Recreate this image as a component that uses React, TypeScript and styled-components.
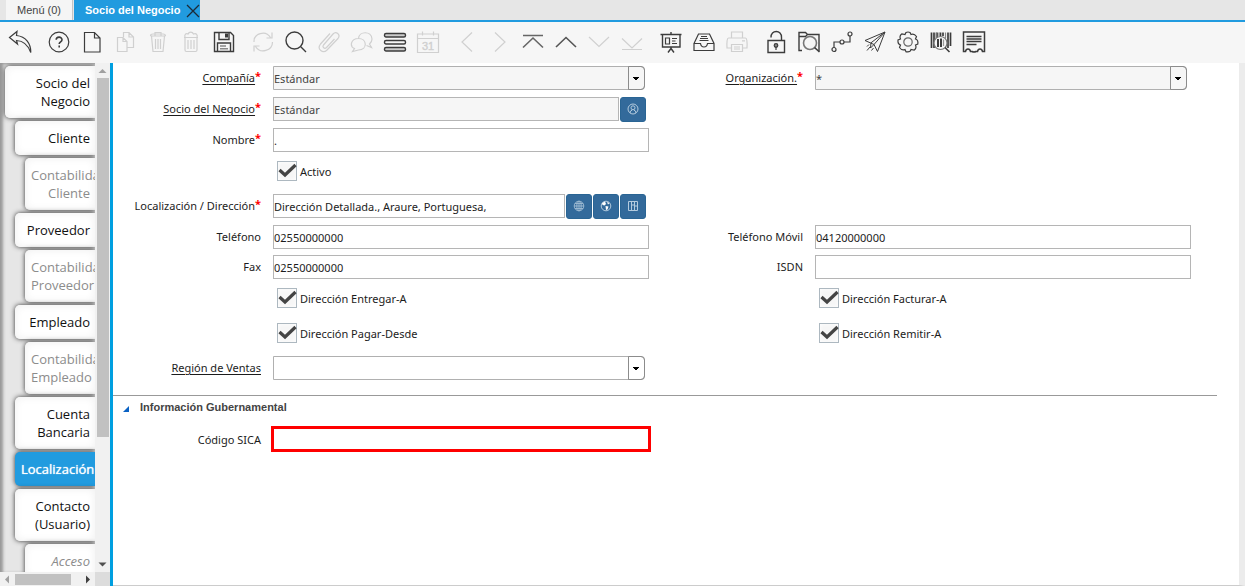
import React, { useState } from 'react';
import styled, { createGlobalStyle, css } from 'styled-components';

const Global = createGlobalStyle`
  * { box-sizing: border-box; }
  body { margin: 0; background: #fff; font-family: 'Noto Sans', sans-serif; font-size: 11px; color: #1c1c1c; }
  button, input, select { font: inherit; color: inherit; margin: 0; }
`;

const Shell = styled.div`
  display: flex;
  flex-direction: column;
  height: 100vh;
  overflow: hidden;
`;

/* Window tabs */
const TabBar = styled.nav`
  display: flex;
  flex: none;
  height: 22px;
  padding-left: 6px;
  background: #e6e6e6;
  border-bottom: 2px solid #219bdf;
  font-family: 'Liberation Sans', sans-serif;
`;
const WindowTab = styled.div<{ $active?: boolean }>`
  display: flex;
  align-items: center;
  padding: 0 ${p => (p.$active ? '0 0 11px' : '11px')};
  margin-right: 1px;
  background: ${p => (p.$active ? '#219bdf' : '#f5f5f5')};
  color: ${p => (p.$active ? '#fff' : '#444')};
  border-right: ${p => (p.$active ? '0' : '1px solid #c4c4c4')};
`;
const TabLabel = styled.button<{ $bold?: boolean }>`
  padding: 0;
  border: 0;
  background: none;
  font-size: 11px;
  font-weight: ${p => (p.$bold ? 700 : 400)};
  line-height: 20px;
  white-space: nowrap;
`;
const CloseTab = styled.button`
  display: flex;
  margin-left: 6px;
  padding: 2px 0 0;
  border: 0;
  background: none;
  color: #1c2a36;
`;

/* Toolbar */
const Toolbar = styled.div`
  display: flex;
  flex: none;
  gap: 6px;
  height: 41px;
  padding: 0 3px 2px;
  background: #f6f6f6;
`;
const ToolGroup = styled.div`
  display: flex;
`;
const ToolButton = styled.button`
  display: flex;
  align-items: center;
  justify-content: center;
  width: 33px;
  padding: 0;
  border: 0;
  background: none;
  color: #3c3c3c;
  &:disabled { color: #d0d0d0; }
`;
const Glyph = styled.svg`
  width: 24px;
  height: 24px;
  fill: none;
  stroke: currentColor;
  stroke-width: 1.2;
`;

/* Body */
const Body = styled.div`
  display: flex;
  flex: 1;
  min-height: 0;
`;
const Side = styled.aside`
  display: grid;
  flex: none;
  grid-template-columns: 95px 15px;
  grid-template-rows: minmax(0, 1fr) 14px;
  border-right: 3px solid #009fe0;
  width: 113px;
`;
const TabList = styled.nav`
  display: flex;
  flex-direction: column;
  gap: 3px;
  padding-top: 3px;
  overflow: hidden;
  background: #e6e6e6;
  box-shadow: inset 3px 1px 3px #999;
`;
const SideTab = styled.button<{ $level: number; $active?: boolean }>`
  flex: none;
  margin-left: ${p => p.$level * 10 - 5}px;
  padding: 8px 5px 8px 6px;
  border: 0;
  border-radius: 5px 0 0 5px;
  background: ${p => (p.$active ? '#219bdf' : '#fff')};
  box-shadow: 0 0 5px #333${p => (p.$active ? '' : ', inset 0 0 8px #eee')};
  color: ${p => (p.$active ? '#fff' : p.$level === 3 ? '#8c8c8c' : '#111')};
  font-family: 'Open Sans', 'Noto Sans', sans-serif;
  font-size: 13px;
  text-shadow: ${p => (p.$active ? '0 0 1px #fff' : 'none')};
  line-height: 18px;
  text-align: right;
`;
const Bar = styled.div<{ $vertical?: boolean }>`
  display: flex;
  flex-direction: ${p => (p.$vertical ? 'column' : 'row')};
  align-items: center;
  background: #f1f1f1;
`;
const Arrow = styled.svg`
  flex: none;
  width: 15px;
  height: 15px;
`;
const Thumb = styled.div<{ $vertical?: boolean }>`
  background: #c1c1c1;
  ${p => (p.$vertical ? css`width: 12px; flex: 3;` : css`height: 11px; flex: 0 0 56px;`)}
`;
const Spacer = styled.div`
  flex: 1;
`;
const Corner = styled.div`
  background: #dcdcdc;
`;

/* Form */
const Panel = styled.main`
  flex: 1;
  min-width: 0;
  padding-right: 22px;
  border-right: 6px solid #ececec;
  border-bottom: 1px solid #ccc;
`;
const Row = styled.div<{ $kind?: 'check' | 'tight' }>`
  display: grid;
  grid-template-columns: minmax(0, 148fr) minmax(0, 376fr) minmax(0, 142fr) minmax(0, 376fr);
  column-gap: 12px;
  align-items: start;
  height: ${p => (p.$kind === 'check' ? 35 : p.$kind === 'tight' ? 30 : 31)}px;
  padding: ${p => (p.$kind === 'check' ? 5 : 3)}px 26px 0 0;
`;
const Label = styled.label<{ $link?: boolean }>`
  display: flex;
  justify-content: flex-end;
  line-height: 24px;
  white-space: nowrap;
  span { text-decoration: ${p => (p.$link ? 'underline' : 'none')}; text-underline-offset: 2px; }
`;
const Star = styled.b`
  color: #f00;
  line-height: 20px;
`;
const TextBox = styled.input`
  width: 100%;
  min-width: 0;
  height: 24px;
  padding: 0;
  border: 1px solid #b5b5b5;
  border-radius: 0;
  outline: none;
  background: #fff;
  &:read-only { background: #f6f6f6; color: #444; }
`;
const AlertBox = styled(TextBox)`
  height: 26px;
  width: calc(100% + 4px);
  margin: 0 -2px;
  border: 3px solid #f00;
`;
const ComboWrap = styled.div`
  display: grid;
  grid-template-columns: minmax(0, 1fr) 17px;
  margin-right: 4px;
`;
const Select = styled.select<{ $muted?: boolean }>`
  grid-area: 1 / 1 / 2 / 3;
  appearance: none;
  height: 24px;
  padding: 0 18px 0 0;
  border: 1px solid #b0b0b0;
  border-radius: 0 4px 4px 0;
  outline: none;
  background: ${p => (p.$muted ? '#f6f6f6' : '#fff')};
  color: #444;
`;
const ComboArrow = styled.svg`
  grid-area: 1 / 2;
  width: 17px;
  height: 24px;
  border: 1px solid #8c8c8c;
  border-radius: 0 4px 4px 0;
  pointer-events: none;
`;
const Composite = styled.div`
  display: flex;
  gap: 1px;
  margin-right: 3px;
`;
const Action = styled.button`
  display: flex;
  flex: none;
  align-items: center;
  justify-content: center;
  width: 26px;
  height: 25px;
  padding: 0 0 1px;
  border: 1px solid #2a6594;
  border-radius: 3px;
  background: #336a9b;
  color: #b4cbde;
`;
const SmallGlyph = styled(Glyph)`
  width: 12px;
  height: 12px;
  stroke-width: 1;
`;
const CheckLine = styled.label`
  display: flex;
  align-items: flex-start;
  gap: 3px;
  height: 20px;
  padding-left: 4px;
`;
const CheckHolder = styled.span`
  display: grid;
  width: 20px;
  height: 20px;
`;
const CheckInput = styled.input`
  grid-area: 1 / 1;
  appearance: none;
  width: 20px;
  height: 20px;
  border: 1px solid #adb8c0;
  background: #f6f6f6;
  box-shadow: inset 0 0 4px #fff;
  &:not(:checked) + svg { visibility: hidden; }
`;
const CheckMark = styled.svg`
  grid-area: 1 / 1;
  width: 20px;
  height: 20px;
  pointer-events: none;
`;
const CheckText = styled.span`
  line-height: 22px;
`;
const Section = styled.section`
  margin-top: 11px;
  border-top: 1px solid #999;
  ${Label} { line-height: 28px; }
`;
const SectionTitle = styled.h2`
  display: flex;
  gap: 11px;
  margin: 0 0 4px;
  padding-left: 10px;
  color: #444;
  font: 700 11px/23px 'Liberation Sans', sans-serif;
`;
const Fold = styled.svg`
  width: 6px;
  height: 6px;
  margin-top: 10px;
`;

const icons: Record<string, React.ReactNode> = {
  undo: <path d="M1.500 7.500 9 1.500 8.500 5.500C18 6.500 23 14 22.800 22.500 20 15 16 10.800 8.500 10.500L9.500 14z" />,
  help: <><circle cx="12" cy="12" r="9.800" /><path strokeWidth="1.600" d="M9.200 9.800c0-3.600 5.800-3.600 5.800 0 0 2-2.800 2.200-2.800 4.200M12.200 15.500v2" /></>,
  page: <path d="M4.500 2.500H14.500L20 8V22H4.500zM14.500 2.500V8H20" />,
  copy: <path d="M4.500 7.500H10l4 4V21.500H4.500zM10 7.500v4h4M10.500 7V2.500H16l4.500 4.500V17.500H14.500M16 2.500V7h4.500" />,
  trash: <path d="M4.500 6H19.500M9 6V2.500H15V6M5.500 6 7 21.500H17L18.500 6M9.500 9V19M12 9V19M14.500 9V19M4.500 6Q4.500 4 7 4H17Q19.500 4 19.500 6" />,
  bin: <path d="M5 7.500H19M6 7.500C5 4 7.500 3 9 4 10 1.500 13.500 1.500 14.500 4 17 3 19 4.500 18 7.500M6 7.500V20q0 1.500 1.500 1.500H16.500Q18 21.500 18 20V7.500M9 10V19M12 10V19M15 10V19" />,
  save: <><path strokeWidth="1.400" d="M2.500 2.500H18.500L21.500 5.500V21.500H2.500zM5.500 21V13H18.500V21M7 2.500V9.500H17V2.500" /><path fill="currentColor" stroke="none" d="M13 3.500h3v4h-3z" /><path stroke="#888" strokeWidth="1.600" d="M8 16h6M8 18.800h8" /></>,
  refresh: <path d="M3 12C2.500 3.500 14.500-.5 19.500 7.500M21 2.500V8H15.500M21.500 12C21.500 20.500 9.500 24.500 4.500 16.500M3 21.500V16H8.500" />,
  search: <path d="m17 17 5 5M19 10.500a8.500 8.500 0 1 1-17 0 8.500 8.500 0 1 1 17 0z" strokeWidth="1.400" />,
  clip: <path d="m17.500 9-8 8.500c-2 2-4.500-.5-3-2.500L16 4c3-3.500 8 .5 5 4.500L10 20c-4 4-10.500-.5-6.500-6L13 3.500" />,
  chat: <path d="M8.500 8.500C.5 8.500-.5 16.500 4.500 18.500L2.500 21.500 8.500 20C18 19.500 17 8.500 8.500 8.500zM8.500 8.500C9 1 21.500.5 22 9 22 12 20 13.500 19.500 14L21.500 17.500 16.500 15.500" />,
  rows: <><rect x="1.500" y="3.500" width="21" height="3.500" rx="1.500" fill="#ccc" strokeWidth="1.400" /><rect x="1.500" y="10.500" width="21" height="3.500" rx="1.500" strokeWidth="1.400" /><rect x="1.500" y="17.500" width="21" height="3.500" rx="1.500" fill="#ccc" strokeWidth="1.400" /></>,
  calendar: <><path d="M1.500 4H22.500V22.500H1.500zM1.500 8.500H22.500M6.500 1.500V5.500M17.500 1.500V5.500" /><text x="12" y="19.500" textAnchor="middle" fontFamily="Liberation Sans, sans-serif" fontSize="11" fill="currentColor" strokeWidth=".4">31</text></>,
  left: <path d="M17 2.500 7 12 17 21.500" />,
  right: <path d="M7 2.500 17 12 7 21.500" />,
  first: <path strokeWidth="1.600" stroke="#666" d="M2 5.500H22M2 17.500 12 8 22 17.500" />,
  up: <path strokeWidth="1.600" stroke="#555" d="M2 17 12 7.500 22 17" />,
  down: <path d="M2 7 12 16.500 22 7" />,
  last: <path d="M2 8.500 12 18 22 8.500M2 19.500H22" />,
  board: <><path strokeWidth="1.400" d="M1.500 4.500H22.500M3.500 5V17H21V5M12 2V4M12 17V19M9 22.500 12 18.500 15 22.500" /><path d="M6.500 8H10.500V14H6.500zM13 8.500H18M13 11H16.500M13 13.500H18" /></>,
  inbox: <path d="M2 13.500 6.500 4H17.500L22 13.500V20.500H2V13.500H8.500Q9 17 12 17T15.500 13.500H22M7.500 10.500H16.500M8 8.500H16M9 6.500H15" />,
  print: <path d="M6.500 8V2H17.500V8M6.500 18H2Q1.500 8 3.500 8H20.500Q22.500 8 22 18H17.500M6.500 14.500H17.500V21.500H6.500zM17 10.800h3M9 17H15M9 19H15" />,
  lock: <><path strokeWidth="1.400" d="M4 10.500H20.500V22.500H4zM7 7.500C6.500-.500 18-.500 17.500 7.500V10" /><circle cx="12" cy="15.500" r="1.800" fill="#888" /><path d="M12 16.500V20" /></>,
  folder: <><path strokeWidth="1.400" d="M5 20.500H2V2.500H8.500L10.500 4.500H22V21M2 6.500H8.500L10 5" /><circle cx="13" cy="13" r="6.500" stroke="#777" fill="#f6f6f6" strokeWidth="1.600" /><path strokeWidth="1.600" d="m17.500 17.500 5 4.500" /></>,
  flow: <><circle cx="4" cy="19.500" r="2" /><circle cx="12" cy="12" r="2" /><circle cx="20" cy="4" r="2" /><path d="M4 17.500V12H10M14 12H20V6" /></>,
  send: <path strokeWidth="1" d="M2 10.500 22 2 14.500 21.500 11 14.500zM11 14.500 22 2 8 12.800 7.500 18 11 14.500M4 20.500 7 17M4 16.500 6 14.500M8.500 20.500 10.500 18" />,
  gear: <><circle cx="12" cy="12" r="4.200" stroke="#666" /><path d="M10 2.500Q12 1.500 14 2.500L15 4.500Q18 3 20.500 6.500L19.500 9Q22.500 10 21.800 14L19.500 15Q21 18 18 20.200L15 19.500Q14.500 22.500 10 21.800L9 19.500Q6 21 3.500 17.500L4.500 15Q1.500 14 2 10L4.500 9Q3 6 6 3.800L9 4.500z" /></>,
  barcode: <><path d="M2.500 2.500V18M5 2.500V18M8 2.500V8M11.500 2.500V6M14 2.500V6M19 2.500V18M21.500 2.500V16" strokeWidth="1.700" /><path d="M7 2.500V8M10 2.500V6M16.500 2.500V8" stroke="#888" /><circle cx="11.500" cy="13" r="6.500" fill="#f6f6f6" stroke="#777" /><path d="M9 9V17M12 8.500V17" strokeWidth="2" /><path d="M14.500 9.500V16" stroke="#999" /><path d="m16 17.500 4.500 4.500" strokeWidth="1.600" /></>,
  receipt: <path strokeWidth="1.500" d="M1.500 2H22.500V21.500H20.500Q20 19 18 19T15.500 21.500H14Q12 22.500 10 21.500H8.500Q8 19 6 19T3.500 21.500H1.500zM4.500 6.500H19.500M4.500 9H19.500M4.500 11.500H19.500M4.500 14.500H14.500" />,
};

type Tool = [icon: string, title: string, disabled?: boolean];
const tools: Tool[][] = [
  [['undo', 'Deshacer']],
  [['help', 'Ayuda'], ['page', 'Nuevo'], ['copy', 'Copiar', true], ['trash', 'Borrar', true], ['bin', 'Eliminar selección', true], ['save', 'Guardar']],
  [['refresh', 'Refrescar', true], ['search', 'Encontrar'], ['clip', 'Anexo', true], ['chat', 'Chat', true], ['rows', 'Cuadrícula'], ['calendar', 'Calendario', true]],
  [['left', 'Anterior', true], ['right', 'Siguiente', true], ['first', 'Registro padre'], ['up', 'Registro anterior'], ['down', 'Registro siguiente', true], ['last', 'Último registro', true]],
  [['board', 'Informe'], ['inbox', 'Archivo'], ['print', 'Imprimir', true]],
  [['lock', 'Bloquear'], ['folder', 'Explorar'], ['flow', 'Flujo de trabajo'], ['send', 'Solicitudes'], ['gear', 'Proceso'], ['barcode', 'Producto'], ['receipt', 'Reporte']],
];

type SideItem = { lines: string[]; level: number; active?: boolean; italic?: boolean };
const sideItems: SideItem[] = [
  { lines: ['Socio del', 'Negocio'], level: 1 },
  { lines: ['Cliente'], level: 2 },
  { lines: ['Contabilidad', 'Cliente'], level: 3 },
  { lines: ['Proveedor'], level: 2 },
  { lines: ['Contabilidad', 'Proveedor'], level: 3 },
  { lines: ['Empleado'], level: 2 },
  { lines: ['Contabilidad', 'Empleado'], level: 3 },
  { lines: ['Cuenta', 'Bancaria'], level: 2 },
  { lines: ['Localización'], level: 2, active: true },
  { lines: ['Contacto', '(Usuario)'], level: 2 },
  { lines: ['Acceso'], level: 3, italic: true },
];

function Caption({ id, text, required, link }: { id: string; text: string; required?: boolean; link?: boolean }) {
  return <Label htmlFor={id} $link={link}><span>{text}</span>{required && <Star>*</Star>}</Label>;
}

function Combo({ id, value, muted }: { id: string; value: string; muted?: boolean }) {
  return (
    <ComboWrap>
      <Select id={id} $muted={muted} defaultValue={value}><option value={value}>{value}</option></Select>
      <ComboArrow viewBox="0 0 15 22" aria-hidden="true"><path d="M4 10h6v1h-1v1H8v1H6v-1H5v-1H4z" fill="#000" /></ComboArrow>
    </ComboWrap>
  );
}

function Check({ text }: { text: string }) {
  const [on, setOn] = useState(true);
  return (
    <CheckLine>
      <CheckHolder>
        <CheckInput type="checkbox" checked={on} onChange={e => setOn(e.target.checked)} />
        <CheckMark viewBox="0 0 20 20" aria-hidden="true"><path d="M2.500 9 8 14 18.500 4" fill="none" stroke="#444" strokeWidth="3.200" /></CheckMark>
      </CheckHolder>
      <CheckText>{text}</CheckText>
    </CheckLine>
  );
}

export default function App() {
  return (
    <>
      <Global />
      <Shell>
        <TabBar>
          <WindowTab><TabLabel>Menú (0)</TabLabel></WindowTab>
          <WindowTab $active>
            <TabLabel $bold>Socio del Negocio</TabLabel>
            <CloseTab aria-label="Cerrar"><svg width="14" height="14" viewBox="0 0 14 14"><path d="M1 1 13 13M13 1 1 13" stroke="currentColor" strokeWidth="1.300" /></svg></CloseTab>
          </WindowTab>
        </TabBar>
        <Toolbar>
          {tools.map((group, i) => (
            <ToolGroup key={i}>
              {group.map(([icon, title, disabled]) => (
                <ToolButton key={icon} aria-label={title} disabled={disabled}>
                  <Glyph viewBox="0 0 24 24">{icons[icon]}</Glyph>
                </ToolButton>
              ))}
            </ToolGroup>
          ))}
        </Toolbar>
        <Body>
          <Side>
            <TabList>
              {sideItems.map((item, i) => (
                <SideTab key={i} $level={item.level} $active={item.active}>
                  {item.lines.map(line => <div key={line}>{item.italic ? <i>{line}</i> : line}</div>)}
                </SideTab>
              ))}
            </TabList>
            <Bar $vertical>
              <Arrow viewBox="0 0 15 15"><path d="M3.500 10 7.500 6l4 4z" fill="#a0a0a0" /></Arrow>
              <Thumb $vertical />
              <Spacer />
              <Arrow viewBox="0 0 15 15"><path d="M3.500 5.500h8l-4 4z" fill="#505050" /></Arrow>
            </Bar>
            <Bar>
              <Arrow viewBox="0 0 15 15"><path d="M9 3.500v8l-4-4z" fill="#a0a0a0" /></Arrow>
              <Thumb />
              <Spacer />
              <Arrow viewBox="0 0 15 15"><path d="M6 3.500v8l4-4z" fill="#404040" /></Arrow>
            </Bar>
            <Corner />
          </Side>
          <Panel>
            <Row>
              <Caption id="company" text="Compañía" required link />
              <Combo id="company" value="Estándar" muted />
              <Caption id="org" text="Organización." required link />
              <Combo id="org" value="*" muted />
            </Row>
            <Row>
              <Caption id="partner" text="Socio del Negocio" required link />
              <Composite>
                <TextBox id="partner" defaultValue="Estándar" readOnly />
                <Action aria-label="Buscar socio"><SmallGlyph viewBox="0 0 12 12"><circle cx="6" cy="6" r="5" /><circle cx="6" cy="4.800" r="2" /><path d="M3 10Q3 7.500 5 7.200M9 10Q9 7.500 7 7.200" /></SmallGlyph></Action>
              </Composite>
            </Row>
            <Row>
              <Caption id="name" text="Nombre" required />
              <TextBox id="name" defaultValue="." />
            </Row>
            <Row $kind="check"><span /><Check text="Activo" /></Row>
            <Row>
              <Caption id="address" text="Localización / Dirección" required />
              <Composite>
                <TextBox id="address" defaultValue="Dirección Detallada., Araure, Portuguesa," />
                <Action aria-label="Dirección"><SmallGlyph viewBox="0 0 12 12" opacity=".8"><circle cx="6" cy="6" r="4.800" /><ellipse cx="6" cy="6" rx="2.200" ry="4.800" /><path d="M1 6H11M6 1V11M2 3.500H10M2 8.500H10" /></SmallGlyph></Action>
                <Action aria-label="Mapa"><SmallGlyph viewBox="0 0 12 12"><circle cx="6" cy="6" r="4.800" /><path d="M2 3 5 1.500 6 4 4.500 5.500 2.500 5zM7 2 9.500 3 8 4.500zM5.500 6 8.500 6.500 7.500 9.500 6 10z" fill="#fff" stroke="none" /></SmallGlyph></Action>
                <Action aria-label="Ruta"><SmallGlyph viewBox="0 0 12 12"><path d="M1.500 1.500H10.500V10.500H1.500zM4.500 1.500V10.500M7.500 1.500V10.500M6 4v2M9 5v2" /></SmallGlyph></Action>
              </Composite>
            </Row>
            <Row $kind="tight">
              <Caption id="phone" text="Teléfono" />
              <TextBox id="phone" defaultValue="02550000000" />
              <Caption id="mobile" text="Teléfono Móvil" />
              <TextBox id="mobile" defaultValue="04120000000" />
            </Row>
            <Row>
              <Caption id="fax" text="Fax" />
              <TextBox id="fax" defaultValue="02550000000" />
              <Caption id="isdn" text="ISDN" />
              <TextBox id="isdn" />
            </Row>
            <Row $kind="check"><span /><Check text="Dirección Entregar-A" /><span /><Check text="Dirección Facturar-A" /></Row>
            <Row $kind="check"><span /><Check text="Dirección Pagar-Desde" /><span /><Check text="Dirección Remitir-A" /></Row>
            <Row>
              <Caption id="region" text="Región de Ventas" link />
              <Combo id="region" value="" />
            </Row>
            <Section>
              <SectionTitle><Fold viewBox="0 0 6 6"><path d="M6 0V6H0z" fill="#0a62c4" /></Fold>Información Gubernamental</SectionTitle>
              <Row>
                <Caption id="sica" text="Código SICA" />
                <AlertBox id="sica" />
              </Row>
            </Section>
          </Panel>
        </Body>
      </Shell>
    </>
  );
}
